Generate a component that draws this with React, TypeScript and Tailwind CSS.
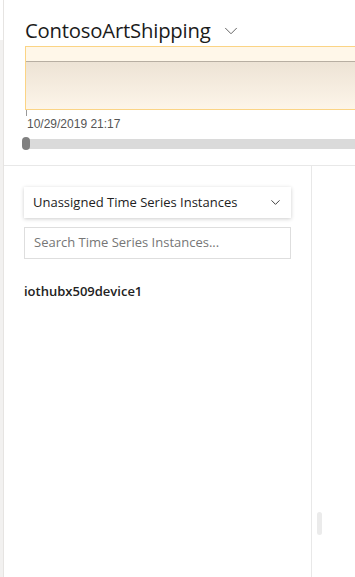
import { ChevronDown } from 'lucide-react';

const App = () => {
	return (
		<div className="flex w-[355px] h-[577px] overflow-hidden bg-white font-['Open_Sans',sans-serif]">
			<div className="w-[4px] shrink-0 flex flex-col border-r border-[#e6e4e2]">
				<div className="h-[40px] bg-white" />
				<div className="flex-1 bg-[#f2f1f0]" />
			</div>
			<div className="flex-1 flex flex-col min-w-0">
				<div className="h-[166px] shrink-0 pl-[21px] border-b border-[#e8e8e8] overflow-hidden">
					<div className="flex items-center gap-[9px] pt-[14px] h-[46px]">
						<span className="text-[20.3px] leading-none text-[#1b1b1b] tracking-[-0.2px] whitespace-nowrap">
							ContosoArtShipping
						</span>
						<ChevronDown size={22} strokeWidth={1} className="text-[#555] mt-[2px]" />
					</div>
					<div className="w-[340px] h-[64px] border border-[#fbd485] flex flex-col">
						<div className="h-[15px] bg-[#fff7e9] border-b border-[#b7aea2]" />
						<div className="flex-1 bg-gradient-to-b from-[#ede3d5] to-[#fdf5e9]" />
					</div>
					<div className="ml-[1px] w-px h-[6px] bg-[#999]" />
					<div className="ml-[2px] mt-[1px] text-[12px] leading-[14px] text-[#555] font-['Liberation_Sans',sans-serif]">
						10/29/2019 21:17
					</div>
					<div className="relative mt-[8px] ml-[1px] h-[10px] bg-[#dadada]">
						<div className="absolute left-[-4px] top-[-2px] w-[8px] h-[13px] rounded-full bg-[#808080]" />
					</div>
				</div>
				<div className="flex-1 flex">
					<div className="w-[308px] shrink-0 border-r border-[#e8e8e8] pl-[20px] pr-[20px] pt-[21px] flex flex-col">
						<div className="h-[31px] bg-white shadow-[0_1px_4px_rgba(0,0,0,0.2)] flex items-center justify-between pl-[9px] pr-[8px] text-[13px] text-[#222]">
							<span>Unassigned Time Series Instances</span>
							<ChevronDown size={15} strokeWidth={1.5} className="text-[#333]" />
						</div>
						<div className="mt-[9px] h-[32px] border border-[#dedede] flex items-center pl-[9px] text-[13px] text-[#767676]">
							Search Time Series Instances...
						</div>
						<div className="mt-[23px] text-[13px] font-semibold text-[#222]">
							iothubx509device1
						</div>
					</div>
					<div className="flex-1 relative">
						<div className="absolute left-[5px] top-[346px] w-[5px] h-[23px] rounded-full bg-[#ebebeb]" />
					</div>
				</div>
			</div>
		</div>
	);
};

export default App;
